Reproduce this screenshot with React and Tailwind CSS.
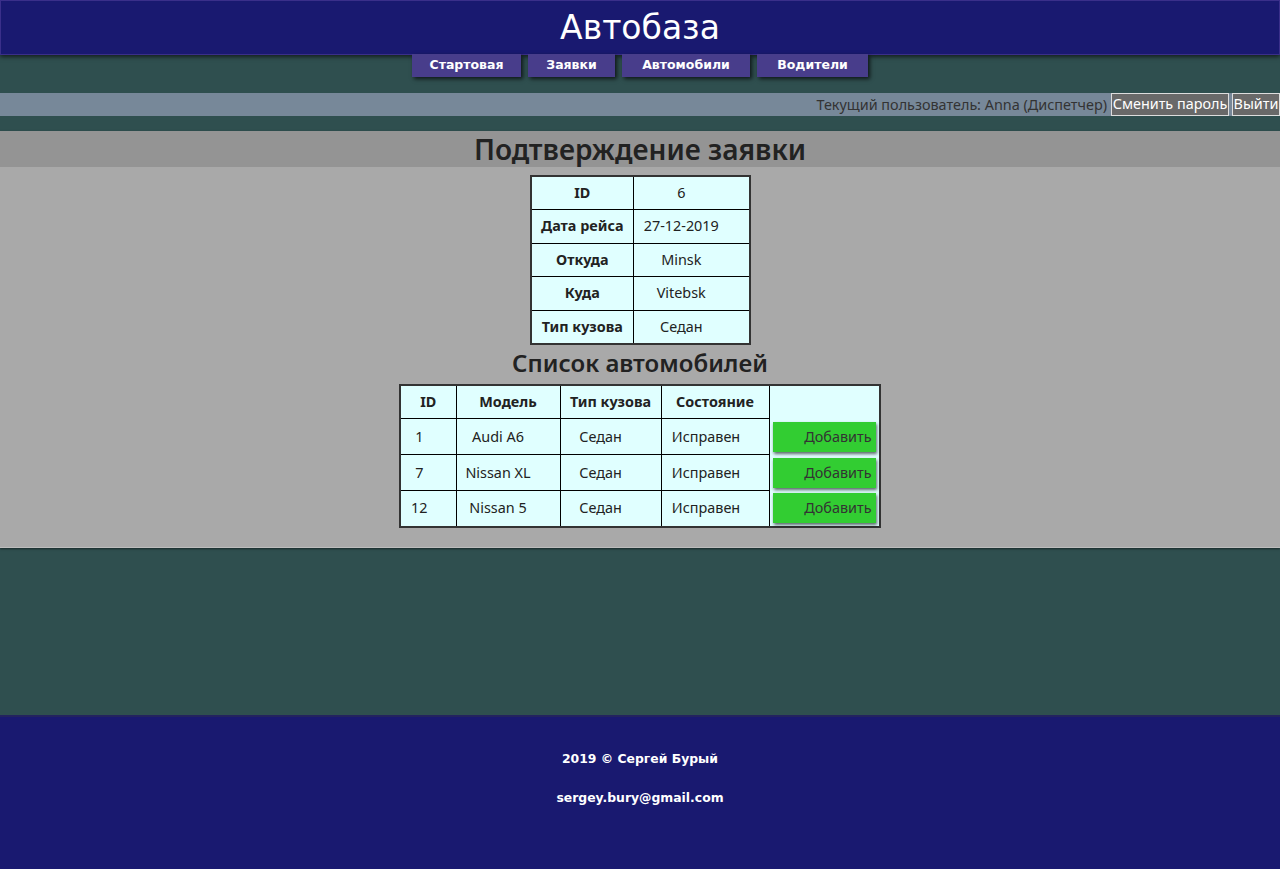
import React from "react";

const comic = { fontFamily: '"Comic Sans MS", "DejaVu Sans", sans-serif' };
const body = { fontFamily: '"Noto Sans", "Open Sans", sans-serif' };

function NavBtn({ w, children }) {
  return (
    <div
      className={`${w} h-[23px] bg-[#483D8B] text-white font-bold text-[12.5px] flex items-center justify-center shadow-[2px_2px_4px_rgba(0,0,0,0.7)] whitespace-nowrap`}
      style={comic}
    >
      {children}
    </div>
  );
}

const cars = [
  ["1", "Audi A6", "Седан", "Исправен"],
  ["7", "Nissan XL", "Седан", "Исправен"],
  ["12", "Nissan 5", "Седан", "Исправен"],
];

const info = [
  ["ID", "6"],
  ["Дата рейса", "27-12-2019"],
  ["Откуда", "Minsk"],
  ["Куда", "Vitebsk"],
  ["Тип кузова", "Седан"],
];

export default function App() {
  return (
    <div className="min-h-[869px] bg-[#2F4F4F] flex flex-col" style={body}>
      <header className="h-[55px] bg-[#191970] border border-[#3a2f8a] shadow-[0_2px_4px_rgba(0,0,0,0.6)] flex items-center justify-center relative z-10">
        <span className="text-white text-[33px] leading-none" style={comic}>
          Автобаза
        </span>
      </header>
      <nav className="flex justify-center gap-[7px] -mt-[1px] relative z-20">
        <NavBtn w="w-[109px]">Стартовая</NavBtn>
        <NavBtn w="w-[87px]">Заявки</NavBtn>
        <NavBtn w="w-[128px]">Автомобили</NavBtn>
        <NavBtn w="w-[111px]">Водители</NavBtn>
      </nav>
      <div className="mt-[16px] h-[23px] bg-[#778899] flex items-center justify-end whitespace-nowrap">
        <span className="text-[#333] text-[14.4px] mr-[4px]">
          Текущий пользователь: Anna (Диспетчер)
        </span>
        <button className="h-[23px] w-[118px] bg-[#696969] text-white text-[14.4px] border border-[#ddd] leading-none whitespace-nowrap px-0">
          Сменить пароль
        </button>
        <button className="h-[23px] w-[48px] ml-[3px] bg-[#696969] text-white text-[14.4px] border border-[#ddd] leading-none whitespace-nowrap px-0">
          Выйти
        </button>
      </div>
      <main className="mt-[15px] bg-[#A9A9A9] pb-[19px] shadow-[0_1px_2px_rgba(0,0,0,0.5)] border-b border-[#bdbdbd]">
        <div className="h-[36px] bg-[#949494] flex items-center justify-center">
          <h1 className="text-[28px] font-semibold text-[#222] leading-none">Подтверждение заявки</h1>
        </div>
        <div className="flex flex-col items-center mt-[8px]">
          <table className="border-collapse border-2 border-[#333] bg-[#E0FFFF] text-[14.4px] text-[#222] whitespace-nowrap">
            <tbody>
              {info.map(([k, v]) => (
                <tr key={k} className="h-[33.5px]">
                  <th className="w-[103px] border border-black font-bold text-center px-[8px]">{k}</th>
                  <td className="w-[116px] border border-black text-center pr-[20px] pl-[0px]">{v}</td>
                </tr>
              ))}
            </tbody>
          </table>
          <h2 className="text-[24px] font-semibold text-[#222] leading-none mt-[6px] mb-[9px]">Список автомобилей</h2>
          <table className="border-collapse border-2 border-[#333] bg-[#E0FFFF] text-[14.4px] text-[#222] whitespace-nowrap">
            <thead>
              <tr className="h-[34px]">
                <th className="w-[56px] border border-black font-bold">ID</th>
                <th className="w-[104px] border border-black font-bold">Модель</th>
                <th className="w-[101px] border border-black font-bold">Тип кузова</th>
                <th className="w-[108px] border border-black font-bold">Состояние</th>
                <th className="w-[111px] border border-black border-b-0"></th>
              </tr>
            </thead>
            <tbody>
              {cars.map((c) => (
                <tr key={c[0]} className="h-[36px]">
                  <td className="border border-black text-center pr-[18px]">{c[0]}</td>
                  <td className="border border-black text-center pr-[20px]">{c[1]}</td>
                  <td className="border border-black text-center pr-[20px]">{c[2]}</td>
                  <td className="border border-black text-center pr-[18px]">{c[3]}</td>
                  <td className="border-0 px-[3px]">
                    <button className="w-[103px] h-[30px] bg-[#32CD32] text-[#333] text-[14.4px] text-right pr-[4px] shadow-[1px_2px_3px_rgba(0,0,0,0.6)]">
                      Добавить
                    </button>
                  </td>
                </tr>
              ))}
            </tbody>
          </table>
        </div>
      </main>
      <div className="flex-1" />
      <footer className="h-[154px] bg-[#191970] border-t-2 border-[#23235f] flex flex-col items-center text-white font-bold text-[12.4px]" style={comic}>
        <div className="mt-[33px]">2019 © Сергей Бурый</div>
        <div className="mt-[20px]">sergey.bury@gmail.com</div>
      </footer>
    </div>
  );
}
